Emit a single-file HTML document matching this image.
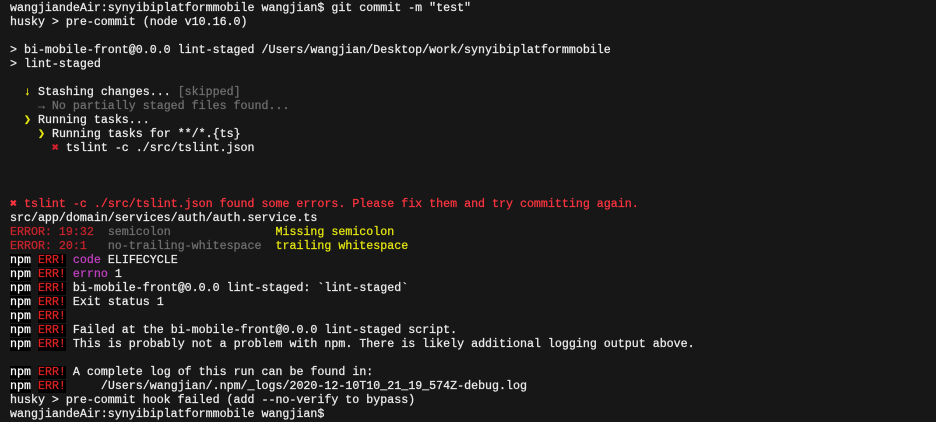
<!DOCTYPE html>
<html><head><meta charset="utf-8"><style>
html,body{margin:0;padding:0;background:#171717;width:936px;height:410px;overflow:hidden}
pre{margin:0;position:absolute;left:10px;top:2px;font-family:"Liberation Mono","DejaVu Sans Mono",monospace;font-size:11.65px;line-height:14px;color:#ececec;white-space:pre;-webkit-text-stroke:0.25px currentColor}
.y{color:#e5e510}.g{color:#6f6f6f}.r{color:#ff3440}.dr{color:#c8232c}.m{color:#c33fc3}
.n{background:#000;color:#fff}.e{background:#000;color:#d22}
.x{color:#d21f2d}
</style></head><body><pre>wangjiandeAir:synyibiplatformmobile wangjian$ git commit -m "test"
husky &gt; pre-commit (node v10.16.0)

&gt; bi-mobile-front@0.0.0 lint-staged /Users/wangjian/Desktop/work/synyibiplatformmobile
&gt; lint-staged

  <span class="y">↓</span> Stashing changes... <span class="g">[skipped]</span>
    <span class="g">→ No partially staged files found...</span>
  <span class="y">❯</span> Running tasks...
    <span class="y">❯</span> Running tasks for **/*.{ts}
      <span class="x">✖</span> tslint -c ./src/tslint.json



<span class="r">✖ tslint -c ./src/tslint.json found some errors. Please fix them and try committing again.</span>
src/app/domain/services/auth/auth.service.ts
<span class="dr">ERROR: 19:32</span>  <span class="g">semicolon</span>               <span class="y">Missing semicolon</span>
<span class="dr">ERROR: 20:1</span>   <span class="g">no-trailing-whitespace</span>  <span class="y">trailing whitespace</span>
<span class="n">npm</span> <span class="e">ERR!</span> <span class="m">code</span> ELIFECYCLE
<span class="n">npm</span> <span class="e">ERR!</span> <span class="m">errno</span> 1
<span class="n">npm</span> <span class="e">ERR!</span> bi-mobile-front@0.0.0 lint-staged: `lint-staged`
<span class="n">npm</span> <span class="e">ERR!</span> Exit status 1
<span class="n">npm</span> <span class="e">ERR!</span>
<span class="n">npm</span> <span class="e">ERR!</span> Failed at the bi-mobile-front@0.0.0 lint-staged script.
<span class="n">npm</span> <span class="e">ERR!</span> This is probably not a problem with npm. There is likely additional logging output above.

<span class="n">npm</span> <span class="e">ERR!</span> A complete log of this run can be found in:
<span class="n">npm</span> <span class="e">ERR!</span>     /Users/wangjian/.npm/_logs/2020-12-10T10_21_19_574Z-debug.log
husky &gt; pre-commit hook failed (add --no-verify to bypass)
wangjiandeAir:synyibiplatformmobile wangjian$ </pre></body></html>
